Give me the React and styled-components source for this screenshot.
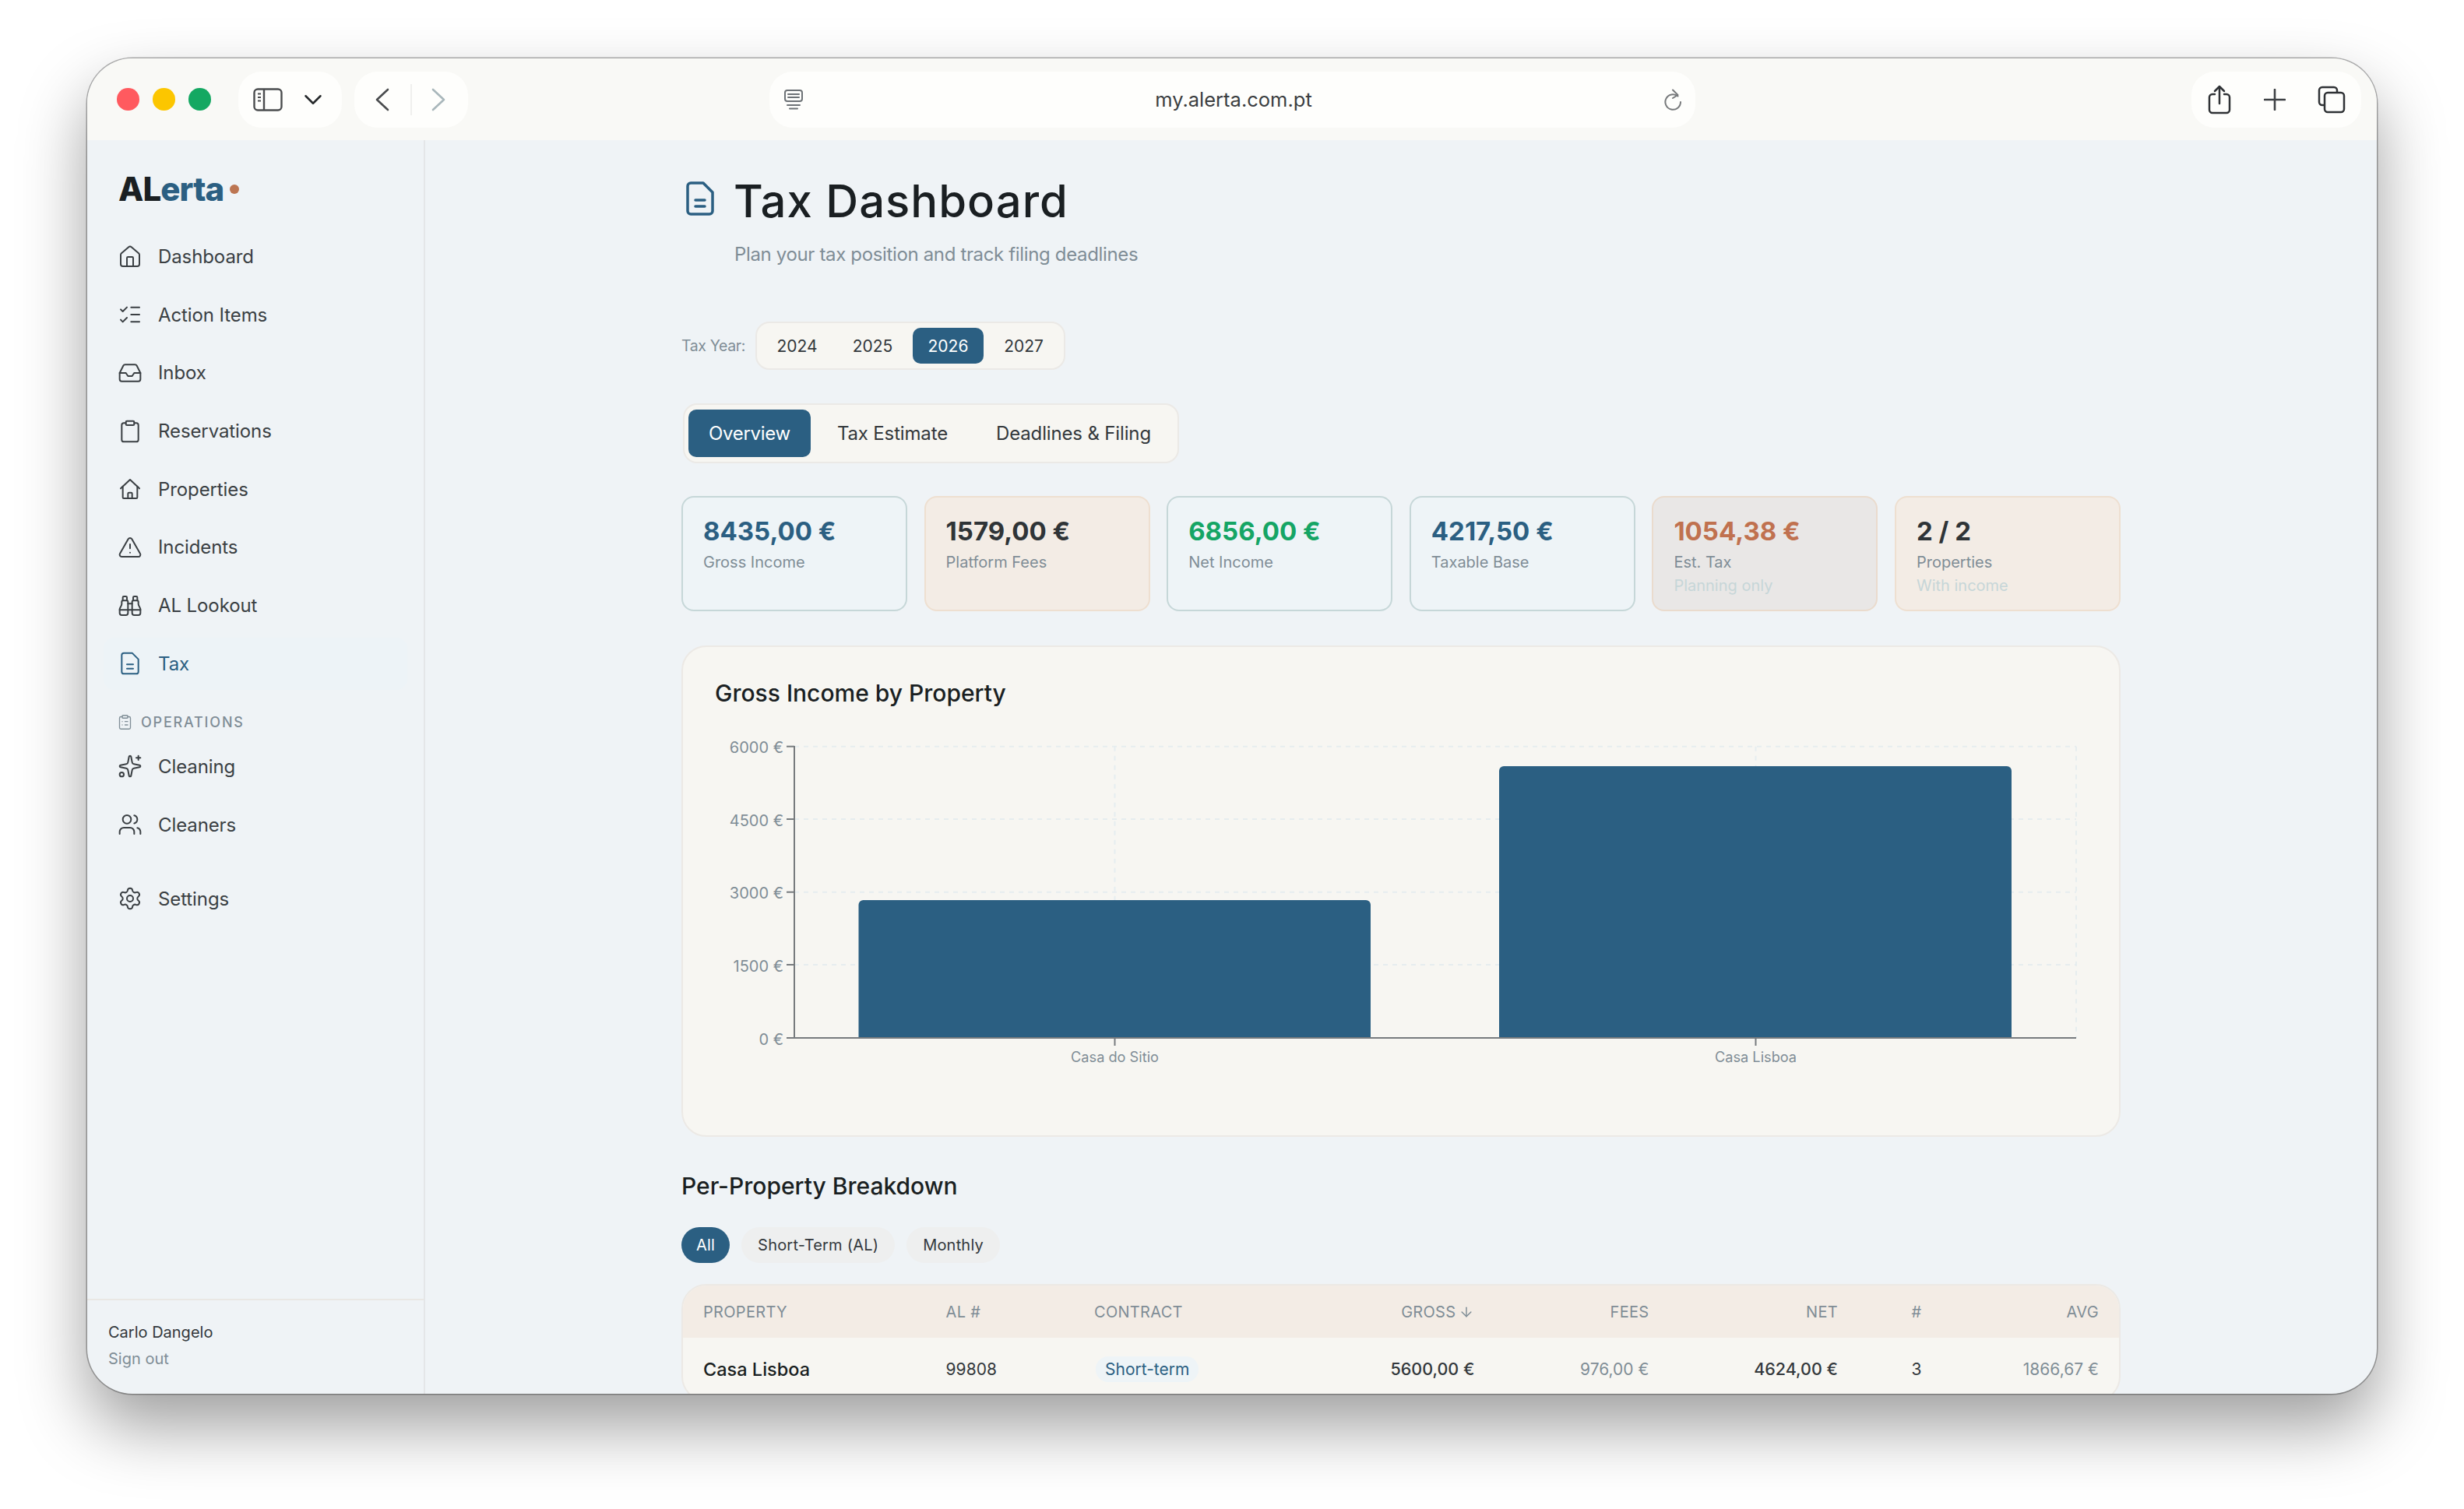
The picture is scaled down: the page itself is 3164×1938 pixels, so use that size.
import React from "react"
import styled, { createGlobalStyle } from "styled-components"
import {
  House,
  ListChecks,
  Inbox,
  Clipboard,
  TriangleAlert,
  Binoculars,
  ClipboardList,
  Sparkles,
  Users,
  Settings,
  ChevronDown,
  ArrowDown,
} from "lucide-react"

const GlobalStyle = createGlobalStyle`
  html, body {
    margin: 0;
    padding: 0;
    background: #fff;
  }
  body {
    font-family: "Inter", "Noto Sans", sans-serif;
    color: #2f3437;
    overflow: hidden;
  }
  * {
    box-sizing: border-box;
  }
`

const NAVY = "#2b5f82"
const GREY = "#7f8d96"

function PropertyIcon() {
  return (
    <svg width="32" height="32" viewBox="0 0 24 24" fill="none" stroke="currentColor" strokeWidth="1.5" strokeLinecap="round" strokeLinejoin="round">
      <path d="M3 11.500 12 3l9 8.500" />
      <path d="M5 9.500V20a1 1 0 0 0 1 1h12a1 1 0 0 0 1-1V9.500" />
      <path d="M10 21v-4.500a1 1 0 0 1 1-1h2a1 1 0 0 1 1 1V21" />
    </svg>
  )
}

function TaxFile({ size = 32, weight = 1.5 }) {
  return (
    <svg width={size} height={size} viewBox="0 0 24 24" fill="none" stroke="currentColor" strokeWidth={weight} strokeLinecap="round" strokeLinejoin="round">
      <path d="M14 2H6a2 2 0 0 0-2 2v16a2 2 0 0 0 2 2h12a2 2 0 0 0 2-2V8z" />
      <path d="M9 13h6" />
      <path d="M9 17h6" />
    </svg>
  )
}

const mainNav = [
  { label: "Dashboard", icon: <House size={32} strokeWidth={1.5} /> },
  { label: "Action Items", icon: <ListChecks size={32} strokeWidth={1.5} /> },
  { label: "Inbox", icon: <Inbox size={32} strokeWidth={1.5} /> },
  { label: "Reservations", icon: <Clipboard size={32} strokeWidth={1.5} /> },
  { label: "Properties", icon: <PropertyIcon /> },
  { label: "Incidents", icon: <TriangleAlert size={32} strokeWidth={1.5} /> },
  { label: "AL Lookout", icon: <Binoculars size={32} strokeWidth={1.5} /> },
  { label: "Tax", icon: <TaxFile />, active: true },
]

const opsNav = [
  { label: "Cleaning", icon: <Sparkles size={32} strokeWidth={1.5} /> },
  { label: "Cleaners", icon: <Users size={32} strokeWidth={1.5} /> },
]

const years = ["2024", "2025", "2026", "2027"]
const tabs = ["Overview", "Tax Estimate", "Deadlines & Filing"]

const stats = [
  { value: "8435,00 €", label: "Gross Income", tone: "blue", color: NAVY },
  { value: "1579,00 €", label: "Platform Fees", tone: "sand", color: "#2f3437" },
  { value: "6856,00 €", label: "Net Income", tone: "blue", color: "#15a565" },
  { value: "4217,50 €", label: "Taxable Base", tone: "blue", color: NAVY },
  { value: "1054,38 €", label: "Est. Tax", note: "Planning only", tone: "grey", color: "#c0714f" },
  { value: "2 / 2", label: "Properties", note: "With income", tone: "sand", color: "#2f3437" },
]

const toneStyles = {
  blue: "background: #eef4f7; border-color: #c6d7d8;",
  sand: "background: #f3ece5; border-color: #eedfd0;",
  grey: "background: #e9e7e6; border-color: #eadbcd;",
}

const ticks = [
  { y: 958.7, label: "6000 €" },
  { y: 1052, label: "4500 €" },
  { y: 1145.7, label: "3000 €" },
  { y: 1239, label: "1500 €" },
  { y: 1333, label: "0 €" },
]

const bars = [
  { x: 1102.5, y: 1156, w: 657.5, cx: 1431.5, label: "Casa do Sitio" },
  { x: 1925, y: 984, w: 658, cx: 2254.5, label: "Casa Lisboa" },
]

function GrossChart() {
  return (
    <svg width="1770" height="450" viewBox="916 930 1770 450" style={{ display: "block" }}>
      <g stroke="#e6edef" strokeWidth="2" strokeDasharray="6 6">
        {ticks.slice(0, 4).map((t) => (
          <line key={t.y} x1="1020" x2="2666" y1={t.y} y2={t.y} />
        ))}
        <line x1="1431.5" x2="1431.5" y1="958.7" y2="1333" />
        <line x1="2254.5" x2="2254.5" y1="958.7" y2="1333" />
        <line x1="2666" x2="2666" y1="958.7" y2="1333" />
      </g>
      {bars.map((b) => (
        <path
          key={b.label}
          d={`M${b.x} 1333V${b.y + 6}a6 6 0 0 1 6-6H${b.x + b.w - 6}a6 6 0 0 1 6 6V1333z`}
          fill={NAVY}
        />
      ))}
      <g stroke="#777b7e" strokeWidth="2">
        <line x1="1020" x2="1020" y1="958" y2="1334" />
        <line x1="1020" x2="2666" y1="1333" y2="1333" />
        {ticks.map((t) => (
          <line key={t.y} x1="1010" x2="1020" y1={t.y} y2={t.y} />
        ))}
        {bars.map((b) => (
          <line key={b.cx} x1={b.cx} x2={b.cx} y1="1333" y2="1343" />
        ))}
      </g>
      <g fill={GREY} fontFamily="Inter, sans-serif">
        {ticks.map((t) => (
          <text key={t.label} x="1006" y={t.y + 8.5} textAnchor="end" fontSize="20">
            {t.label}
          </text>
        ))}
        {bars.map((b) => (
          <text key={b.cx} x={b.cx} y="1364" textAnchor="middle" fontSize="18.200">
            {b.label}
          </text>
        ))}
      </g>
    </svg>
  )
}

export default function App() {
  return (
    <Page>
      <GlobalStyle />
      <Browser>
        <Toolbar>
          <Lights>
            <Light $color="#ff5a5f" />
            <Light $color="#fcc600" />
            <Light $color="#14a862" />
          </Lights>
          <SidebarPill>
            <svg width="38" height="30" viewBox="0 0 38 30" fill="none" stroke="#4a4c4e" strokeWidth="2.4">
              <rect x="1.500" y="1.500" width="35" height="27" rx="4.500" />
              <path d="M14 1.500v27" />
              <path d="M6 7.500h4M6 12h4M6 16.500h4" strokeWidth="2" />
            </svg>
            <ChevronDown size={38} strokeWidth={1.6} color="#26292b" />
          </SidebarPill>
          <NavPill>
            <svg width="20" height="30" viewBox="0 0 20 30" fill="none" stroke="#4a4c4e" strokeWidth="2.600" strokeLinecap="round" strokeLinejoin="round">
              <path d="M17 2 3 15l14 13" />
            </svg>
            <NavDivider />
            <svg width="20" height="30" viewBox="0 0 20 30" fill="none" stroke="#a9b7bb" strokeWidth="2.600" strokeLinecap="round" strokeLinejoin="round">
              <path d="m3 2 14 13L3 28" />
            </svg>
          </NavPill>
          <AddressBar>
            <svg width="26" height="28" viewBox="0 0 26 28" fill="none" stroke="#6d7276" strokeWidth="2" strokeLinecap="round">
              <rect x="2" y="2" width="22" height="14" rx="3" />
              <path d="M6 7h14M6 11h14M5 21h16M8 25.500h10" />
            </svg>
            <Url>my.alerta.com.pt</Url>
            <svg width="24" height="28" viewBox="0 0 24 28" fill="none" stroke="#77797b" strokeWidth="2" strokeLinecap="round" strokeLinejoin="round">
              <path d="M18.500 9.500A9.800 9.800 0 1 0 22 17" />
              <path d="M12 1.500l6.500 6.500-6.500 4" />
            </svg>
          </AddressBar>
          <ActionsPill>
            <svg width="32" height="38" viewBox="0 0 32 38" fill="none" stroke="#2f3235" strokeWidth="2.500" strokeLinecap="round" strokeLinejoin="round">
              <path d="M10 12H7a4 4 0 0 0-4 4v16a4 4 0 0 0 4 4h18a4 4 0 0 0 4-4V16a4 4 0 0 0-4-4h-3" />
              <path d="M16 24V2M10 8l6-6 6 6" />
            </svg>
            <svg width="28" height="28" viewBox="0 0 28 28" fill="none" stroke="#3f4245" strokeWidth="2.600" strokeLinecap="round">
              <path d="M14 1v26M1 14h26" />
            </svg>
            <svg width="36" height="36" viewBox="0 0 36 36" fill="none" stroke="#2f3235" strokeWidth="2.500" strokeLinejoin="round">
              <path d="M8 25H6a4 4 0 0 1-4-4V6a4 4 0 0 1 4-4h15a4 4 0 0 1 4 4v2" />
              <rect x="9" y="9" width="25" height="25" rx="4" />
            </svg>
          </ActionsPill>
        </Toolbar>
        <Body>
          <Sidebar>
            <Logo>
              AL<LogoAccent>erta</LogoAccent>
              <LogoDot />
            </Logo>
            <NavList>
              {mainNav.map((item) => (
                <NavItem key={item.label} $active={item.active}>
                  <NavIcon>{item.icon}</NavIcon>
                  {item.label}
                </NavItem>
              ))}
            </NavList>
            <GroupLabel>
              <ClipboardList size={21} strokeWidth={1.5} />
              OPERATIONS
            </GroupLabel>
            <NavList>
              {opsNav.map((item) => (
                <NavItem key={item.label}>
                  <NavIcon>{item.icon}</NavIcon>
                  {item.label}
                </NavItem>
              ))}
            </NavList>
            <SettingsSlot>
              <NavItem>
                <NavIcon>
                  <Settings size={32} strokeWidth={1.5} />
                </NavIcon>
                Settings
              </NavItem>
            </SettingsSlot>
            <SidebarFooter>
              <UserName>Carlo Dangelo</UserName>
              <SignOut>Sign out</SignOut>
            </SidebarFooter>
          </Sidebar>
          <Main>
            <Content>
              <Header>
                <HeaderIcon>
                  <TaxFile size={48} weight={1.75} />
                </HeaderIcon>
                <div>
                  <Title>Tax Dashboard</Title>
                  <Subtitle>Plan your tax position and track filing deadlines</Subtitle>
                </div>
              </Header>
              <YearRow>
                <YearLabel>Tax Year:</YearLabel>
                <YearGroup>
                  {years.map((y) => (
                    <YearButton key={y} $active={y === "2026"}>
                      {y}
                    </YearButton>
                  ))}
                </YearGroup>
              </YearRow>
              <TabGroup>
                {tabs.map((t) => (
                  <TabButton key={t} $active={t === "Overview"}>
                    {t}
                  </TabButton>
                ))}
              </TabGroup>
              <StatGrid>
                {stats.map((s) => (
                  <StatCard key={s.label} $tone={s.tone}>
                    <StatValue $color={s.color}>{s.value}</StatValue>
                    <StatLabel>{s.label}</StatLabel>
                    {s.note && <StatNote>{s.note}</StatNote>}
                  </StatCard>
                ))}
              </StatGrid>
              <ChartCard>
                <ChartTitle>Gross Income by Property</ChartTitle>
                <GrossChart />
              </ChartCard>
              <SectionTitle>Per-Property Breakdown</SectionTitle>
              <FilterRow>
                <FilterChip $active>All</FilterChip>
                <FilterChip>Short-Term (AL)</FilterChip>
                <FilterChip>Monthly</FilterChip>
              </FilterRow>
              <Table>
                <HeadRow>
                  <span>PROPERTY</span>
                  <span>AL #</span>
                  <span>CONTRACT</span>
                  <RightCell>
                    GROSS <ArrowDown size={20} strokeWidth={1.75} />
                  </RightCell>
                  <RightCell>FEES</RightCell>
                  <RightCell>NET</RightCell>
                  <RightCell>#</RightCell>
                  <RightCell>AVG</RightCell>
                </HeadRow>
                <BodyRow>
                  <PropertyName>Casa Lisboa</PropertyName>
                  <span>99808</span>
                  <span>
                    <ContractBadge>Short-term</ContractBadge>
                  </span>
                  <RightCell $strong>5600,00 €</RightCell>
                  <RightCell $muted>976,00 €</RightCell>
                  <RightCell $strong>4624,00 €</RightCell>
                  <RightCell>3</RightCell>
                  <RightCell $muted>1866,67 €</RightCell>
                </BodyRow>
              </Table>
            </Content>
          </Main>
        </Body>
      </Browser>
    </Page>
  )
}

const Page = styled.div`
  width: 3164px;
  height: 1938px;
  padding: 75px 112px 0;
  background: #fff;
`
const Browser = styled.div`
  width: 2940px;
  height: 1715px;
  border-radius: 58px;
  overflow: hidden;
  display: flex;
  flex-direction: column;
  background: #eff3f6;
  box-shadow: 0 0 0 1.5px rgba(0, 0, 0, 0.3), 0 42px 85px rgba(0, 0, 0, 0.38);
`
const Toolbar = styled.div`
  height: 105px;
  flex: none;
  display: flex;
  align-items: center;
  padding: 0 20px 0 38px;
  background: #f9f9f6;
`
const Lights = styled.div`
  display: flex;
  gap: 17.5px;
  margin-right: 35px;
`
const Light = styled.span`
  width: 28.5px;
  height: 28.5px;
  border-radius: 50%;
  background: ${(p) => p.$color};
`
const Pill = styled.div`
  height: 72px;
  border-radius: 30px;
  background: #fefefc;
  display: flex;
  align-items: center;
`
const SidebarPill = styled(Pill)`
  width: 133px;
  padding-left: 19px;
  gap: 20px;
`
const NavPill = styled(Pill)`
  width: 146px;
  margin-left: 16px;
  padding-left: 26px;
`
const NavDivider = styled.span`
  width: 2px;
  height: 40px;
  margin: 0 24px 0 26px;
  background: #f0f0ee;
`
const AddressBar = styled(Pill)`
  width: 1189px;
  margin-left: 387px;
  padding: 0 16px 0 18px;
  justify-content: space-between;
`
const Url = styled.span`
  font-size: 25.5px;
  color: #3b3e41;
`
const ActionsPill = styled(Pill)`
  width: 218px;
  margin-left: auto;
  padding: 0 20px;
  justify-content: space-between;
`
const Body = styled.div`
  flex: 1;
  min-height: 0;
  display: flex;
`
const Sidebar = styled.aside`
  width: 434px;
  flex: none;
  display: flex;
  flex-direction: column;
  border-right: 2px solid #e4e6e8;
  padding-top: 42px;
`
const Logo = styled.div`
  display: flex;
  align-items: baseline;
  height: 42px;
  line-height: 42px;
  margin: 0 0 32px 40px;
  font-size: 42px;
  font-weight: 800;
  letter-spacing: -0.9px;
  color: #1a1f22;
`
const LogoAccent = styled.span`
  color: ${NAVY};
`
const LogoDot = styled.span`
  width: 12px;
  height: 12px;
  margin-left: 8px;
  border-radius: 50%;
  background: #bc7552;
  align-self: center;
`
const NavList = styled.div`
  display: flex;
  flex-direction: column;
  gap: 7.7px;
  margin: 0 21px;
`
const NavItem = styled.div`
  height: 67px;
  display: flex;
  align-items: center;
  gap: 20px;
  padding-left: 18px;
  border-radius: 14px;
  font-size: 24px;
  letter-spacing: -0.1px;
  color: ${(p) => (p.$active ? NAVY : "#3a3f43")};
  background: ${(p) => (p.$active ? "#edf3f7" : "transparent")};
`
const NavIcon = styled.span`
  width: 32px;
  height: 32px;
  flex: none;
  display: flex;
`
const GroupLabel = styled.div`
  display: flex;
  align-items: center;
  gap: 10px;
  height: 20px;
  margin: 32px 0 13px 38px;
  font-size: 18px;
  font-weight: 500;
  letter-spacing: 1.8px;
  color: ${GREY};
`
const SettingsSlot = styled.div`
  margin: 28px 21px 0;
`
const SidebarFooter = styled.div`
  margin-top: auto;
  height: 122px;
  padding: 26px 0 0 27px;
  border-top: 2px solid #e9e7e4;
`
const UserName = styled.div`
  font-size: 20px;
  line-height: 30px;
  color: #33383c;
`
const SignOut = styled.div`
  margin-top: 6px;
  font-size: 20px;
  line-height: 26px;
  color: ${GREY};
`
const Main = styled.main`
  flex: 1;
  min-width: 0;
  overflow: hidden;
`
const Content = styled.div`
  width: 1848px;
  margin: 0 auto;
  padding-top: 46px;
`
const Header = styled.div`
  display: flex;
  gap: 19px;
`
const HeaderIcon = styled.span`
  flex: none;
  height: 48px;
  margin-top: 5px;
  color: ${NAVY};
`
const Title = styled.h1`
  margin: 0;
  font-size: 58px;
  line-height: 64px;
  font-weight: 500;
  letter-spacing: 1px;
  color: #1a1f22;
`
const Subtitle = styled.p`
  margin: 20px 0 0 1px;
  font-size: 24px;
  line-height: 34px;
  letter-spacing: -0.35px;
  color: ${GREY};
`
const YearRow = styled.div`
  display: flex;
  align-items: center;
  gap: 15px;
  margin-top: 69px;
`
const YearLabel = styled.span`
  width: 80px;
  font-size: 19.5px;
  letter-spacing: -0.4px;
  white-space: nowrap;
  color: ${GREY};
`
const Segment = styled.div`
  display: inline-flex;
  background: #f7f6f2;
  border: 2px solid #ebe9e6;
  border-radius: 18px;
`
const YearGroup = styled(Segment)`
  height: 62px;
  padding: 6px;
  gap: 6px;
`
const YearButton = styled.span`
  width: 91px;
  display: flex;
  align-items: center;
  justify-content: center;
  border-radius: 10px;
  font-size: 21px;
  color: ${(p) => (p.$active ? "#fff" : "#33383c")};
  background: ${(p) => (p.$active ? NAVY : "transparent")};
`
const TabGroup = styled(Segment)`
  display: flex;
  width: 637px;
  height: 77px;
  margin: 43px 0 0 2px;
  padding: 6px 5px;
`
const TabButton = styled.span`
  display: flex;
  align-items: center;
  padding: 0 31px;
  border-radius: 10px;
  font-size: 24px;
  letter-spacing: -0.15px;
  white-space: nowrap;
  color: ${(p) => (p.$active ? "#fff" : "#33383c")};
  background: ${(p) => (p.$active ? NAVY : "transparent")};
  &:first-child {
    padding: 0 26px;
    margin-right: 3px;
    letter-spacing: -0.3px;
  }
`
const StatGrid = styled.div`
  display: grid;
  grid-template-columns: repeat(6, 290px);
  justify-content: space-between;
  margin-top: 42px;
`
const StatCard = styled.div`
  height: 148px;
  padding: 24px 26px 0;
  border: 2px solid;
  border-radius: 16px;
  ${(p) => toneStyles[p.$tone]}
`
const StatValue = styled.div`
  font-size: 33px;
  line-height: 38px;
  font-weight: 700;
  color: ${(p) => p.$color};
`
const StatLabel = styled.div`
  margin-top: 6px;
  font-size: 20px;
  line-height: 30px;
  color: ${GREY};
`
const StatNote = styled.div`
  font-size: 20px;
  line-height: 30px;
  color: #c6d6d8;
`
const ChartCard = styled.section`
  height: 631px;
  margin-top: 44px;
  padding: 41px 39px 0;
  background: #f7f6f2;
  border: 2px solid #ece9e5;
  border-radius: 32px;
`
const ChartTitle = styled.h2`
  margin: 0 0 22px 2px;
  font-size: 30px;
  line-height: 36px;
  font-weight: 450;
  color: #1a1f22;
`
const SectionTitle = styled.h2`
  margin: 43px 0 0;
  font-size: 30px;
  line-height: 40px;
  font-weight: 450;
  color: #1a1f22;
`
const FilterRow = styled.div`
  display: flex;
  gap: 15px;
  margin-top: 33px;
`
const FilterChip = styled.span`
  height: 46px;
  display: flex;
  align-items: center;
  padding: 0 ${(p) => (p.$active ? "19px" : "21px")};
  border-radius: 23px;
  font-size: 20px;
  letter-spacing: 0.2px;
  color: ${(p) => (p.$active ? "#fff" : "#33383c")};
  background: ${(p) => (p.$active ? NAVY : "#eeefef")};
`
const Table = styled.div`
  margin-top: 27px;
  border: 2px solid #ece9e5;
  border-radius: 32px;
  overflow: hidden;
  background: #f7f6f2;
`
const Row = styled.div`
  display: grid;
  grid-template-columns: 311.6px 190.4px 250px 238.4px 224.1px 242.5px 107.5px 227.5px;
  padding-left: 26px;
  align-items: center;
`
const HeadRow = styled(Row)`
  height: 67px;
  background: #f3ece5;
  font-size: 20px;
  letter-spacing: 0.3px;
  color: ${GREY};
`
const BodyRow = styled(Row)`
  height: 80px;
  font-size: 21px;
  color: #33383c;
`
const RightCell = styled.span`
  display: flex;
  justify-content: flex-end;
  align-items: center;
  gap: 4px;
  font-size: ${(p) => (p.$strong ? "21.5px" : "inherit")};
  font-weight: ${(p) => (p.$strong ? 500 : 400)};
  color: ${(p) => (p.$muted ? GREY : "inherit")};
`
const PropertyName = styled.span`
  font-size: 23.5px;
  font-weight: 500;
  color: #1a1f22;
`
const ContractBadge = styled.span`
  display: inline-flex;
  align-items: center;
  height: 33px;
  margin-left: 2px;
  padding: 0 12px;
  border-radius: 16px;
  font-size: 21px;
  color: ${NAVY};
  background: #eef4f7;
`
